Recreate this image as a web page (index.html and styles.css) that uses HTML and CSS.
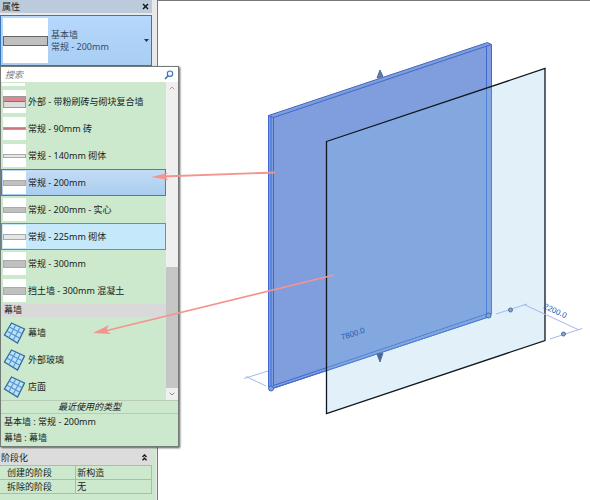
FILE: index.html
```html
<!DOCTYPE html>
<html lang="zh-CN">
<head>
<meta charset="utf-8">
<meta name="viewport" content="width=device-width, initial-scale=1">
<title>属性</title>
<link rel="stylesheet" href="styles.css">
</head>
<body>
<div class="workspace">
  <aside class="properties">
    <header class="palette-title">
      <h1>属性</h1>
      <button class="close" type="button" aria-label="关闭"><svg viewBox="0 0 7 7" width="7" height="7"><path d="M1 1L6 6M6 1L1 6" stroke="#111" stroke-width="1.4"/></svg></button>
    </header>
    <div class="selector">
      <button class="type-button" type="button" aria-expanded="true">
        <span class="preview"><span class="wall wall-main"></span></span>
        <span class="type-name"><span>基本墙</span><span>常规 - 200mm</span></span>
        <svg class="caret" viewBox="0 0 5 3" width="5" height="3"><path d="M0 0H5L2.5 3Z" fill="#17375e"/></svg>
      </button>
      <div class="dropdown">
        <label class="search">
          <input type="text" placeholder="搜索" aria-label="搜索">
          <svg viewBox="0 0 10 10" width="10" height="10"><circle cx="6" cy="3.7" r="2.7" fill="#f2f8ff" stroke="#3573b5" stroke-width="1.1"/><path d="M4.1 5.8L1 9" stroke="#3573b5" stroke-width="1.5"/></svg>
        </label>
        <div class="list-area">
          <div class="type-list">
            <div class="clipped-row"><span></span></div>
            <button class="type-row" type="button"><span class="thumb"><span class="wall wall-composite"></span></span>外部 - 带粉刷砖与砌块复合墙</button>
            <button class="type-row" type="button"><span class="thumb"><span class="wall wall-brick"></span></span>常规 - 90mm 砖</button>
            <button class="type-row" type="button"><span class="thumb"><span class="wall wall-block"></span></span>常规 - 140mm 砌体</button>
            <button class="type-row selected" type="button"><span class="thumb"><span class="wall wall-medium"></span></span>常规 - 200mm</button>
            <button class="type-row" type="button"><span class="thumb"><span class="wall wall-medium"></span></span>常规 - 200mm - 实心</button>
            <button class="type-row hovered" type="button"><span class="thumb"><span class="wall wall-block wall-block-thick"></span></span>常规 - 225mm 砌体</button>
            <button class="type-row" type="button"><span class="thumb"><span class="wall wall-thick"></span></span>常规 - 300mm</button>
            <button class="type-row" type="button"><span class="thumb"><span class="wall wall-thick"></span></span>挡土墙 - 300mm 混凝土</button>
            <h2 class="family">幕墙</h2>
            <button class="type-row" type="button"><svg class="curtain" viewBox="0 0 22 22"><use href="#curtain-grid"/></svg>幕墙</button>
            <button class="type-row" type="button"><svg class="curtain" viewBox="0 0 22 22"><use href="#curtain-grid"/></svg>外部玻璃</button>
            <button class="type-row" type="button"><svg class="curtain" viewBox="0 0 22 22"><use href="#curtain-grid"/></svg>店面</button>
          </div>
          <div class="scrollbar">
            <button class="scroll-button scroll-up" type="button" aria-label="向上滚动"><svg viewBox="0 0 6 4" width="6" height="4"><path d="M.7 3.3L3 1L5.3 3.3" fill="none" stroke="#b99a98"/></svg></button>
            <div class="scroll-thumb"></div>
            <button class="scroll-button" type="button" aria-label="向下滚动"><svg viewBox="0 0 6 4" width="6" height="4"><path d="M.7 .7L3 3L5.3 .7" fill="none" stroke="#888"/></svg></button>
          </div>
        </div>
        <h2 class="recent-title">最近使用的类型</h2>
        <button class="recent" type="button">基本墙 : 常规 - 200mm</button>
        <button class="recent" type="button">幕墙 : 幕墙</button>
      </div>
    </div>
    <section class="phasing">
      <button class="phase-header" type="button">阶段化<svg viewBox="0 0 5 7" width="5" height="7"><path d="M.5 3L2.5 1L4.5 3M.5 6.2L2.5 4.2L4.5 6.2" fill="none" stroke="#111" stroke-width="1.3"/></svg></button>
      <table>
        <tr><th scope="row">创建的阶段</th><td>新构造</td></tr>
        <tr><th scope="row">拆除的阶段</th><td>无</td></tr>
      </table>
    </section>
  </aside>
  <main class="view">
    <svg class="model" viewBox="158 0 432 500" role="img" aria-label="三维视图">
      <g stroke="#3f68cf" stroke-linejoin="round">
        <path d="M268.500 115.500L487.500 42.500L491.500 44.500V314L488.500 317L271 389L268.500 387Z" fill="#809edd"/>
        <path d="M268.500 115.500L273.500 117.500V386M273.500 117.500L491.500 44.500M271 116V387M486.500 46V314L273.500 385.500M488.500 317L271 389" fill="none"/>
      </g>
      <path d="M326.500 141.500L545 68.500V340.500L326.500 413.500Z" fill="#8dc8e8" fill-opacity=".25"/>
      <path d="M326.500 141.500L545 68.500V340.500L326.500 413.500Z" fill="none" stroke="#10161e" stroke-width="1.3"/>
      <path d="M268 371L244 378.500M246 376.500L266 386M496 314L527 304M550 339L582 328.500M524 304.500L579 330" fill="none" stroke="#a4b9e9"/>
      <g fill="#82a6ce" stroke="#526f9a">
        <circle cx="510.500" cy="310" r="2"/><circle cx="563.500" cy="334" r="2"/>
        <circle cx="271" cy="388.500" r="2.500" stroke="#3f68b8"/><circle cx="488.500" cy="315.500" r="2.500" stroke="#3f68b8"/>
        <path d="M380 70L377 78L383 76.500Z" fill="#6678a3"/><path d="M377 354L383 353L380 362Z" fill="#506796"/>
      </g>
      <text class="dimension" transform="translate(342 340) rotate(-18)">7800.0</text>
      <text class="dimension" transform="translate(543 308) rotate(25)">2200.0</text>
    </svg>
  </main>
  <svg class="annotations" viewBox="0 0 590 500" aria-hidden="true">
    <g stroke="#f49491" stroke-width="1.800" fill="#f49491">
      <path d="M275 172.500L162 176.500M334 275L105 331" fill="none"/>
      <path d="M151 177L168 173L164 176.500L169 180Z" stroke="none"/>
      <path d="M93 333L109 325L106 330.500L111 334Z" stroke="none"/>
    </g>
  </svg>
</div>
<svg class="symbols" aria-hidden="true"><defs><g id="curtain-grid"><path d="M8 1L21 7L14 21L1 13Z" fill="#b9e2fb" stroke="#326b9b" stroke-width="1.300"/><path d="M12.300 3L5.300 15.700M16.700 5L9.700 18.300M5.700 5L18.700 11.700M3.300 9L16.300 16.300" stroke="#5593c8" stroke-width="1.100"/></g></defs></svg>
</body>
</html>
```
FILE: styles.css
```css
* { box-sizing: border-box; }
body { margin: 0; background: #fff; color: #17231c; font: 9px/12px "Noto Sans", "Noto Sans CJK SC", sans-serif; }
button, input { margin: 0; padding: 0; border: 0; background: none; color: inherit; font: inherit; text-align: left; }
h1, h2 { margin: 0; font-size: 9px; font-weight: 400; }
.workspace { position: relative; display: flex; min-height: 100vh; overflow: hidden; }
.properties { display: flex; flex: none; flex-direction: column; width: 158px; padding-right: 5px; background: #e9e9e9; border-right: 1px solid #777; }
.palette-title { display: flex; align-items: center; justify-content: space-between; height: 13px; margin-bottom: 2px; padding: 0 3px 0 2px; background: #bccbdc; }
.close { display: flex; }
.selector { position: relative; z-index: 1; }
.type-button { display: flex; align-items: center; width: 100%; height: 51px; padding: 0 2px; border: 1px solid #3976b5; background: linear-gradient(#b5d8fb, #a9cef4); color: #3a4b5e; }
.preview { display: flex; align-items: center; width: 45px; height: 45px; background: #fff; }
.type-name { display: flex; flex: 1; flex-direction: column; padding-left: 3px; }
.wall { display: block; width: 100%; border: 1px solid #aaa; background: #c0c0c0; }
.wall-main { height: 10px; border-color: #666; }
.dropdown { position: absolute; top: 51px; left: 0; width: 179px; border: 1px solid #747b76; background: #cce8cd; box-shadow: 1px 1px 2px #555; }
.search { display: flex; align-items: center; height: 15px; padding: 0 4px; background: #fff; }
.search input { flex: 1; min-width: 0; outline: 0; font-style: italic; }
.search input::placeholder { color: #777; opacity: 1; }
.list-area { display: flex; border-bottom: 1px solid #b7cbb7; }
.type-list { flex: 1; min-width: 0; }
.clipped-row { height: 6px; padding: 1px; }
.clipped-row span { display: block; width: 23px; height: 3px; background: #fff; }
.type-row { display: flex; align-items: center; gap: 2px; width: 100%; height: 27px; padding: 0 1px; border: 1px solid transparent; white-space: nowrap; }
.selected { border-color: #3e82bd; background: linear-gradient(#c4dcf5, #a9cdef); }
.hovered { border-color: #4b9abc; background: #c5e8fa; }
.thumb { display: flex; align-items: center; width: 23px; height: 23px; background: #fff; }
.wall-composite { height: 12px; background: linear-gradient(#d98991 40%, #777 40% 50%, #ddd 50%); border-color: #999; }
.wall-brick { height: 3px; background: #c8757e; border-color: #d38d94; }
.wall-block { height: 4px; background: #e6e6e6; }
.wall-block-thick { height: 6px; }
.wall-medium { height: 6px; }
.wall-thick { height: 8px; }
.family { height: 13px; margin-bottom: 2px; padding-left: 3px; background: #d9d9d9; }
.curtain { flex: none; width: 23px; height: 22px; }
.scrollbar { display: flex; flex: none; flex-direction: column; width: 12px; background: #efefef; }
.scroll-button { display: flex; align-items: center; justify-content: center; height: 12px; }
.scroll-up { margin-bottom: auto; }
.scroll-thumb { height: 121px; background: #c6c6c6; }
.recent-title { border-bottom: 1px solid #b7cbb7; font-style: italic; text-align: center; }
.recent { display: block; width: 100%; height: 16px; padding-left: 3px; }
.phasing { margin-top: auto; margin-right: -4px; padding: 0 4px 6px 0; background: #cce8cd; }
.phase-header { display: flex; align-items: center; justify-content: space-between; width: 100%; height: 15px; padding: 0 5px 0 1px; background: #dcdcdc; }
.phasing table { width: 100%; border-collapse: collapse; table-layout: fixed; }
.phasing th, .phasing td { height: 14px; padding: 0 1px; border: 1px solid #a9bea9; font-weight: 400; line-height: 12px; text-align: left; }
.phasing th { padding-left: 7px; border-left: 0; }
.view { flex: 1; min-width: 0; border-top: 1px solid #777; }
.model { display: block; width: 432px; margin-top: -1px; }
.dimension { fill: #3155b4; font: 8px "Liberation Sans", sans-serif; }
.annotations { position: absolute; z-index: 2; top: 0; left: 0; width: 590px; pointer-events: none; }
.symbols { position: absolute; width: 0; height: 0; }
```
